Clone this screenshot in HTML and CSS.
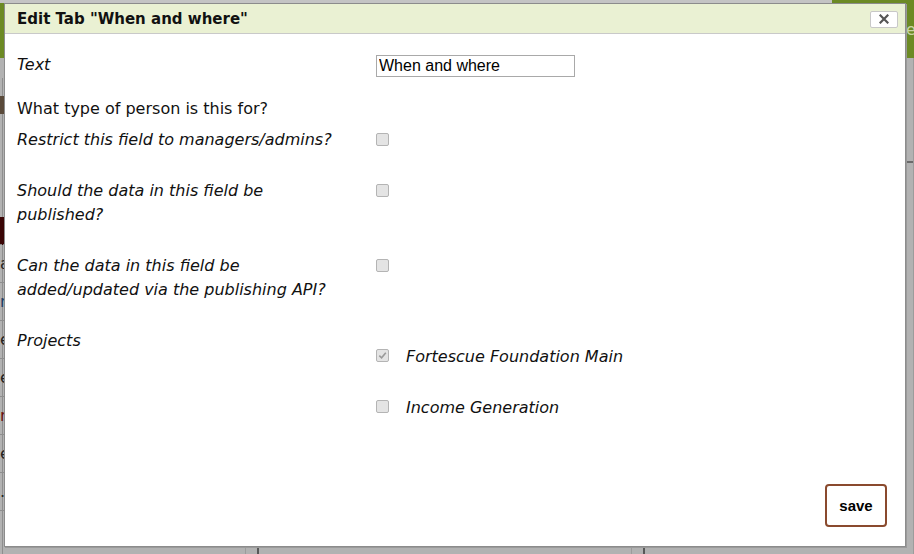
FILE: index.html
```html
<!DOCTYPE html>
<html lang="en">
<head>
<meta charset="utf-8">
<title>Edit Tab</title>
<link rel="stylesheet" href="styles.css">
</head>
<body>
<div class="page">
  <div class="topbar">
    <div class="tabstrip"></div>
    <span class="brand">e</span>
  </div>
  <div class="content">
    <div class="col col-left">
      <div class="lbar"></div>
      <div class="dark-mark"></div>
      <ul class="side-list">
        <li class="sl-red"></li>
        <li>a</li>
        <li class="sl-blue">r</li>
        <li>e</li>
        <li>e</li>
        <li class="sl-dred">r</li>
        <li>el</li>
        <li>.</li>
      </ul>
      <p class="foot-text">of the buttons above to</p>
    </div>
    <div class="col col-mid"><div class="inner"></div></div>
    <div class="col col-right"><div class="inner"><div class="inner-head"></div></div></div>
  </div>
</div>

<div class="dialog">
  <div class="dialog-head">
    <span class="dialog-title">Edit Tab "When and where"</span>
    <button class="close-btn" type="button" aria-label="close">
      <svg width="10" height="10" viewBox="0 0 10 10"><path d="M1.5 1.5 L8.5 8.5 M8.5 1.5 L1.5 8.5" stroke="#555" stroke-width="2.2" stroke-linecap="square"/></svg>
    </button>
  </div>
  <div class="dialog-body">
    <div class="row row-text">
      <label class="lbl">Text</label>
      <div class="ctl"><input class="txt" type="text" value="When and where"></div>
    </div>
    <div class="row row-plain">
      <span class="lbl plain">What type of person is this for?</span>
      <div class="ctl"></div>
    </div>
    <div class="row">
      <label class="lbl">Restrict this field to managers/admins?</label>
      <div class="ctl"><span class="cb"></span></div>
    </div>
    <div class="row">
      <label class="lbl">Should the data in this field be published?</label>
      <div class="ctl"><span class="cb"></span></div>
    </div>
    <div class="row">
      <label class="lbl">Can the data in this field be added/updated via the publishing API?</label>
      <div class="ctl"><span class="cb"></span></div>
    </div>
    <div class="row row-projects">
      <span class="lbl">Projects</span>
      <div class="ctl">
        <ul class="proj-list">
          <li class="proj"><span class="cb checked"><svg width="9" height="9" viewBox="0 0 9 9"><path d="M1.3 4.6 L3.6 6.8 L7.8 1.8" fill="none" stroke="#9a9a9a" stroke-width="1.6"/></svg></span><span class="proj-name">Fortescue Foundation Main</span></li>
          <li class="proj"><span class="cb"></span><span class="proj-name">Income Generation</span></li>
        </ul>
      </div>
    </div>
  </div>
  <div class="dialog-foot">
    <button class="save-btn" type="button">save</button>
  </div>
</div>
</body>
</html>
```
FILE: styles.css
```css
* { box-sizing: border-box; }
html, body { margin: 0; padding: 0; }
body {
  width: 914px;
  height: 554px;
  overflow: hidden;
  background: #b2b2b2;
  font-family: "DejaVu Sans", Verdana, sans-serif;
  color: #000;
  position: relative;
}

/* ---- dimmed page behind the dialog ---- */
.page { display: flex; flex-direction: column; width: 914px; height: 554px; }
.topbar {
  height: 58px;
  background: #6c8a24;
  position: relative;
  flex: none;
}
.tabstrip { width: 832px; height: 3px; background: #c4c4c4; }
.brand {
  position: absolute;
  left: 906px;
  top: 20px;
  font-size: 16px;
  color: #c9d4a4;
}
.content { flex: 1; display: flex; }
.col { border-right: 1px solid #9c9c9c; position: relative; }
.col-left { width: 246px; flex: none; overflow: hidden; }
.col-mid { width: 386px; flex: none; padding-left: 11px; }
.col-right { flex: 1; padding-left: 11px; }
.inner { height: 100%; border-left: 2px solid #585858; }
.inner-head { height: 105px; border-bottom: 2px solid #6a6a6a; }
.lbar { position: absolute; left: 2px; top: 20px; bottom: 0; width: 1px; background: #8e8e8e; }
.dark-mark { position: absolute; left: 0; top: 38px; width: 5px; height: 18px; background: #5a4a3a; }
.side-list { list-style: none; margin: 0; padding: 0; position: absolute; left: 0; top: 159px; width: 246px; }
.side-list li {
  height: 38px;
  border-bottom: 1px solid #8e8e8e;
  font-size: 16px;
  line-height: 38px;
  padding-left: 0;
  color: #222;
}
.side-list li.sl-red { height: 28px; border-bottom: 1px dotted #888; background: linear-gradient(#b2b2b2 0 0) 5px 0 / 241px 100% no-repeat, #3a0505; }
.side-list li.sl-blue { color: #1d3f6a; }
.side-list li.sl-dred { color: #6a1010; }
.foot-text {
  position: absolute;
  left: 3px;
  top: 538px;
  margin: 0;
  font-size: 16px;
  line-height: 16px;
  white-space: nowrap;
  color: #1a1a1a;
}

/* ---- dialog ---- */
.dialog {
  position: absolute;
  left: 4px;
  top: 3px;
  width: 902px;
  height: 544px;
  background: #fff;
  border: 1px solid #8c8c8c;
  display: flex;
  flex-direction: column;
  box-shadow: 1px 1px 0 #9a9a9a;
}
.dialog-head {
  height: 30px;
  flex: none;
  background: #eaf1d3;
  border-bottom: 1px solid #c9c9c9;
  display: flex;
  align-items: center;
  justify-content: space-between;
  padding: 0 7px 0 12px;
}
.dialog-title { font-weight: bold; font-size: 15px; color: #111; }
.close-btn {
  width: 28px;
  height: 17px;
  padding: 0;
  margin-top: 1px;
  background: #fff;
  border: 1px solid #c8c8c8;
  border-radius: 2px;
  display: flex;
  align-items: center;
  justify-content: center;
}
.close-btn svg { display: block; }

.dialog-body {
  flex: 1;
  padding: 19px 12px 0 12px;
  display: flex;
  flex-direction: column;
}
.row {
  display: grid;
  grid-template-columns: 326px 1fr;
  column-gap: 33px;
  align-items: start;
  margin-bottom: 27px;
}
.row-text { margin-bottom: 20px; }
.row-plain { margin-bottom: 7px; }
.lbl {
  font-style: italic;
  font-size: 16px;
  line-height: 24px;
  color: #111;
}
.lbl.plain { font-style: normal; }
.ctl { min-height: 24px; }
.txt {
  display: block;
  margin-top: 2px;
  width: 199px;
  height: 22px;
  padding: 0 2px;
  border: 1px solid #a9a9a9;
  font-family: "Liberation Sans", Arial, sans-serif;
  font-size: 16px;
  color: #000;
}
.cb {
  display: inline-flex;
  align-items: center;
  justify-content: center;
  width: 13px;
  height: 13px;
  margin-top: 5px;
  border: 1px solid #b4b4b4;
  border-radius: 2px;
  background: #e4e4e4;
  vertical-align: top;
}
.cb svg { display: block; }
.proj-list { list-style: none; margin: 16px 0 0 0; padding: 0; display: flex; flex-direction: column; gap: 27px; }
.proj { display: flex; align-items: flex-start; height: 24px; }
.proj .cb { margin-top: 4px; }
.proj-name {
  margin-left: 17px;
  font-style: italic;
  font-size: 16px;
  line-height: 24px;
  color: #111;
}

.dialog-foot {
  flex: none;
  display: flex;
  justify-content: flex-end;
  padding: 0 18px 19px 0;
}
.save-btn {
  width: 62px;
  height: 43px;
  background: #fff;
  border: 2px solid #8a4a2e;
  border-radius: 4px;
  font-family: "Liberation Sans", Arial, sans-serif;
  font-weight: bold;
  font-size: 15px;
  color: #000;
  padding: 0;
}
```
